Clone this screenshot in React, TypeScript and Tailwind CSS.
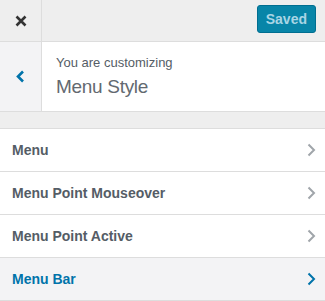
import React from "react";

const Chevron = ({ color }: { color: string }) => (
  <svg width="9" height="14" viewBox="0 0 9 14" fill="none">
    <path d="M1.5 1.5 L7 7 L1.5 12.5" stroke={color} strokeWidth="2" />
  </svg>
);

const rows = ["Menu", "Menu Point Mouseover", "Menu Point Active"];

export default function App() {
  return (
    <div
      className="w-[325px] h-[301px] overflow-hidden bg-[#eeeeee]"
      style={{ fontFamily: '"Liberation Sans", Arial, sans-serif' }}
    >
      <div className="flex h-[42px] border-b border-[#dddddd]">
        <div className="w-[42px] border-r border-[#dddddd] flex items-center justify-center">
          <svg width="12" height="12" viewBox="0 0 12 12">
            <path d="M1.5 1.5 L10.5 10.5 M10.5 1.5 L1.5 10.5" stroke="#333" strokeWidth="2.6" />
          </svg>
        </div>
        <div className="flex-1 flex items-start justify-end pr-[9px] pt-[5px]">
          <div className="h-[28px] px-[8px] rounded-[3px] bg-[#0885a8] border border-[#006e90] text-[#a9d5e5] text-[14px] font-semibold flex items-center">
            Saved
          </div>
        </div>
      </div>
      <div className="flex h-[70px] border-b border-[#dddddd] bg-white">
        <div className="w-[42px] border-r border-[#dddddd] bg-[#f3f3f5] flex items-center justify-center">
          <svg width="9" height="13" viewBox="0 0 9 13">
            <path d="M7 1.5 L2 6.5 L7 11.5" stroke="#0073aa" strokeWidth="2.6" fill="none" />
          </svg>
        </div>
        <div className="flex-1 pl-[14px] pt-[13px]">
          <div className="text-[13px] text-[#555d66] leading-[16px]">You are customizing</div>
          <div className="text-[19px] font-light text-[#636970] leading-[26px] mt-[3px] tracking-[-0.3px]">Menu Style</div>
        </div>
      </div>
      <div className="h-[16px]" />
      <div className="border-t border-[#dddddd]">
        {rows.map((r) => (
          <div key={r} className="h-[43px] bg-white border-b border-[#dddddd] flex items-center justify-between pl-[12px] pr-[9px]">
            <span className="text-[14px] font-bold text-[#555d66]">{r}</span>
            <Chevron color="#a0a5aa" />
          </div>
        ))}
        <div className="h-[43px] bg-[#f3f3f5] border-b border-[#dddddd] flex items-center justify-between pl-[12px] pr-[9px]">
          <span className="text-[14px] font-bold text-[#0073aa]">Menu Bar</span>
          <Chevron color="#0073aa" />
        </div>
      </div>
    </div>
  );
}
